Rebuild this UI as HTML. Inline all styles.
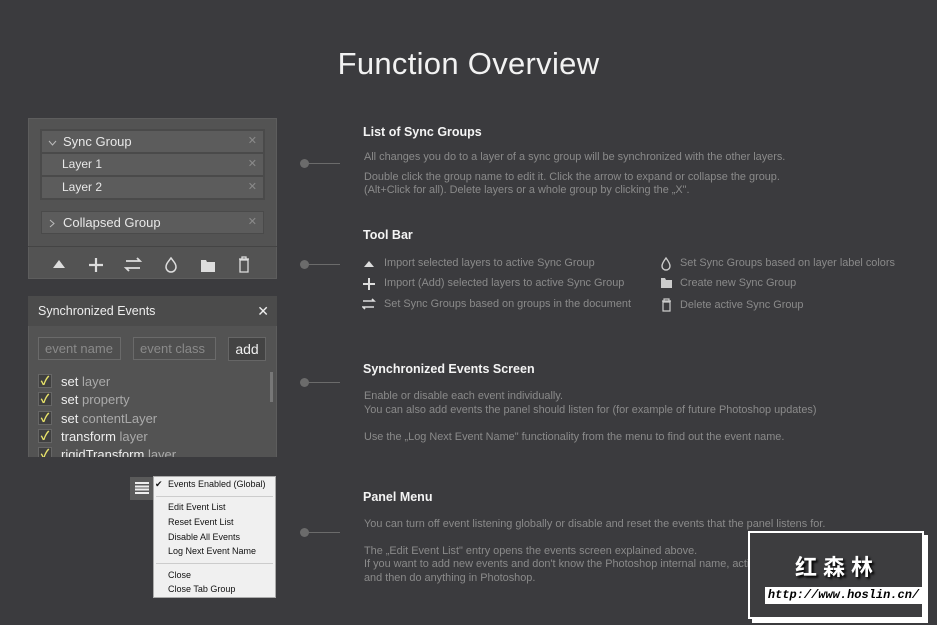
<!DOCTYPE html>
<html><head><meta charset="utf-8"><style>
*{margin:0;padding:0;box-sizing:border-box}
body{width:937px;height:625px;background:#3b3b3e;font-family:"Liberation Sans","Noto Sans CJK SC",sans-serif;position:relative;overflow:hidden;color:#8c8c8c}
.a{position:absolute;white-space:nowrap}
h1{position:absolute;left:0;width:937px;top:46px;text-align:center;font-weight:normal;font-size:31px;color:#f2f2f2;letter-spacing:0.3px}
.h{position:absolute;left:363px;font-size:12.5px;font-weight:bold;color:#f4f4f4}
.t{position:absolute;font-size:10.9px;color:#8a8a8a;white-space:nowrap}
.dot{position:absolute;left:300px;width:9px;height:9px;border-radius:50%;background:#6b6b6b}
.ln{position:absolute;left:305px;width:35px;height:1px;background:#6b6b6b}
.p{position:absolute;background:#535353;border:1px solid #5d5d5d}
.row{position:absolute;left:41px;width:223px;height:23px;background:#5c5c5c;border:1px solid #4a4a4a;color:#e8e8e8;font-size:12px;line-height:21px}
.x{position:absolute;right:6px;top:0;color:#8a8a8a;font-size:11px}
.cb{position:absolute;left:38px;width:14px;height:14px;background:#3f3f3f;border:1px solid #666;color:#e8e36a;font-size:12px;font-weight:bold;line-height:12px;text-align:center}
.ev{position:absolute;left:61px;font-size:13px;color:#eee}
.ev span{color:#aaa}
.m{position:absolute;left:168px;font-size:9px;color:#111}
</style></head><body>
<h1>Function Overview</h1>

<div class="p" style="left:28px;top:118px;width:249px;height:161px"></div>
<div class="a" style="left:28px;top:246px;width:249px;height:1px;background:#444"></div>
<div class="a" style="left:40px;top:129px;width:225px;height:71px;background:#4a4a4a"></div>
<div class="row" style="top:130px;font-size:13px"><svg style="position:absolute;left:6px;top:9px" width="9" height="6"><path d="M1 1l3.5 4L8 1" stroke="#bbb" fill="none"/></svg><span style="position:absolute;left:21px">Sync Group</span><span class="x">✕</span></div>
<div class="row" style="top:153px;padding-left:20px">Layer 1<span class="x">✕</span></div>
<div class="row" style="top:176px;padding-left:20px">Layer 2<span class="x">✕</span></div>
<div class="row" style="top:211px;font-size:13px"><svg style="position:absolute;left:7px;top:7px" width="6" height="9"><path d="M1 1l4 3.5L1 8" stroke="#bbb" fill="none"/></svg><span style="position:absolute;left:21px">Collapsed Group</span><span class="x">✕</span></div>
<svg class="a" style="left:50px;top:255px" width="200" height="20" viewBox="0 0 200 20" fill="#ddd" stroke="#ddd">
<polygon points="3,13 9,5 15,13" stroke="none"/>
<path d="M46 3v14M39 10h14" stroke-width="2.2" fill="none"/>
<path d="M76 6h14l-3-3M90 13H76l3 3" stroke-width="1.8" fill="none"/>
<path d="M121 3c-3 4-5 6-5 9a5 5 0 0 0 10 0c0-3-2-5-5-9z" fill="none" stroke-width="1.5"/>
<path d="M151 5h5l1 2h8v10h-14z" stroke="none"/>
<path d="M189 4h10M192 4v-2h4v2M190 5h8v12h-8z" stroke-width="1.3" fill="none"/>
</svg>

<div class="p" style="left:28px;top:296px;width:249px;height:161px;border-bottom:none"></div>
<div class="a" style="left:28px;top:296px;width:249px;height:30px;background:#4b4b4b;color:#eee;font-size:12.5px;line-height:30px;padding-left:10px">Synchronized Events<span style="position:absolute;right:8px;font-size:14px">✕</span></div>
<div class="a" style="left:38px;top:337px;width:83px;height:23px;border:1px solid #6a6a6a;background:#4f4f4f;color:#8a8a8a;font-size:13px;line-height:21px;padding-left:6px">event name</div>
<div class="a" style="left:133px;top:337px;width:83px;height:23px;border:1px solid #6a6a6a;background:#4f4f4f;color:#8a8a8a;font-size:13px;line-height:21px;padding-left:6px">event class</div>
<div class="a" style="left:228px;top:337px;width:38px;height:24px;background:#434343;border:1px solid #666;color:#eee;font-size:14px;line-height:22px;text-align:center">add</div>
<div class="a" style="left:270px;top:372px;width:3px;height:30px;background:#777"></div>
<div class="cb" style="top:374px">✓</div><div class="ev" style="top:374px">set <span>layer</span></div>
<div class="cb" style="top:392px">✓</div><div class="ev" style="top:392px">set <span>property</span></div>
<div class="cb" style="top:411px">✓</div><div class="ev" style="top:411px">set <span>contentLayer</span></div>
<div class="cb" style="top:429px">✓</div><div class="ev" style="top:429px">transform <span>layer</span></div>
<div class="a" style="left:28px;top:447px;width:249px;height:10px;overflow:hidden"><div class="cb" style="left:10px;top:0">✓</div><div class="ev" style="left:33px;top:0">rigidTransform <span>layer</span></div></div>

<div class="a" style="left:130px;top:477px;width:24px;height:23px;background:#5a5a5a"></div>
<div class="a" style="left:135px;top:482px;width:14px;height:12px;background:repeating-linear-gradient(#eee 0 2px,transparent 2px 3.3px)"></div>
<div class="a" style="left:153px;top:476px;width:123px;height:122px;background:#f0f0f0;border:1px solid #aaa"></div>
<div class="a" style="left:155px;top:479px;font-size:9px;color:#111">✔</div>
<div class="m" style="top:479px">Events Enabled (Global)</div>
<div class="a" style="left:156px;top:496px;width:117px;height:1px;background:#ccc"></div>
<div class="m" style="top:502px">Edit Event List</div>
<div class="m" style="top:517px">Reset Event List</div>
<div class="m" style="top:532px">Disable All Events</div>
<div class="m" style="top:546px">Log Next Event Name</div>
<div class="a" style="left:156px;top:563px;width:117px;height:1px;background:#ccc"></div>
<div class="m" style="top:570px">Close</div>
<div class="m" style="top:584px">Close Tab Group</div>

<div class="dot" style="top:159px"></div><div class="ln" style="top:163px"></div>
<div class="dot" style="top:260px"></div><div class="ln" style="top:264px"></div>
<div class="dot" style="top:378px"></div><div class="ln" style="top:382px"></div>
<div class="dot" style="top:528px"></div><div class="ln" style="top:532px"></div>

<div class="h" style="top:125px">List of Sync Groups</div>
<div class="t" style="left:364px;top:151px">All changes you do to a layer of a sync group will be synchronized with the other layers.</div>
<div class="t" style="left:364px;top:171px">Double click the group name to edit it. Click the arrow to expand or collapse the group.</div>
<div class="t" style="left:364px;top:184px">(Alt+Click for all). Delete layers or a whole group by clicking the „X".</div>

<div class="h" style="top:228px">Tool Bar</div>
<svg class="a" style="left:362px;top:256px" width="20" height="56" fill="#ddd" stroke="#ddd">
<polygon points="2,11 7,5 12,11" stroke="none"/>
<path d="M7 22v12M1 28h12" stroke-width="2" fill="none"/>
<path d="M1 45h11l-2-2M12 51H1l2 2" stroke-width="1.6" fill="none"/>
</svg>
<div class="t" style="left:384px;top:257px">Import selected layers to active Sync Group</div>
<div class="t" style="left:384px;top:277px">Import (Add) selected layers to active Sync Group</div>
<div class="t" style="left:384px;top:298px">Set Sync Groups based on groups in the document</div>
<svg class="a" style="left:660px;top:256px" width="16" height="56" fill="#ccc" stroke="#ccc">
<path d="M6 2c-3 4-4 6-4 8a4 4 0 0 0 8 0c0-2-1-4-4-8z" fill="none" stroke-width="1.4"/>
<path d="M1 22h4l1 2h6v8H1z" stroke="none"/>
<path d="M2 45h9M4 45v-2h5v2M3 46h7v9H3z" stroke-width="1.2" fill="none"/>
</svg>
<div class="t" style="left:680px;top:257px">Set Sync Groups based on layer label colors</div>
<div class="t" style="left:680px;top:277px">Create new Sync Group</div>
<div class="t" style="left:680px;top:299px">Delete active Sync Group</div>

<div class="h" style="top:362px">Synchronized Events Screen</div>
<div class="t" style="left:364px;top:390px">Enable or disable each event individually.</div>
<div class="t" style="left:364px;top:404px">You can also add events the panel should listen for (for example of future Photoshop updates)</div>
<div class="t" style="left:364px;top:431px">Use the „Log Next Event Name" functionality from the menu to find out the event name.</div>

<div class="h" style="top:490px">Panel Menu</div>
<div class="t" style="left:364px;top:518px">You can turn off event listening globally or disable and reset the events that the panel listens for.</div>
<div class="t" style="left:364px;top:545px">The „Edit Event List" entry opens the events screen explained above.</div>
<div class="t" style="left:364px;top:558px">If you want to add new events and don't know the Photoshop internal name, activate logging</div>
<div class="t" style="left:364px;top:572px">and then do anything in Photoshop.</div>

<div class="a" style="left:752px;top:535px;width:176px;height:88px;background:#fff"></div>
<div class="a" style="left:748px;top:531px;width:176px;height:88px;background:#3d3d3f;border:2px solid #fff"></div>
<div class="a" style="left:795px;top:550px;font-size:22px;font-weight:bold;color:#fff;letter-spacing:6px;text-shadow:2px 2px 2px #000;font-family:'Noto Sans CJK SC',sans-serif">红森林</div>
<div class="a" style="left:765px;top:587px;width:157px;height:17px;background:#fff;color:#000;font-family:'Liberation Mono',monospace;font-style:italic;font-weight:bold;font-size:12px;line-height:17px;text-align:center">http://www.hoslin.cn/</div>
</body></html>
